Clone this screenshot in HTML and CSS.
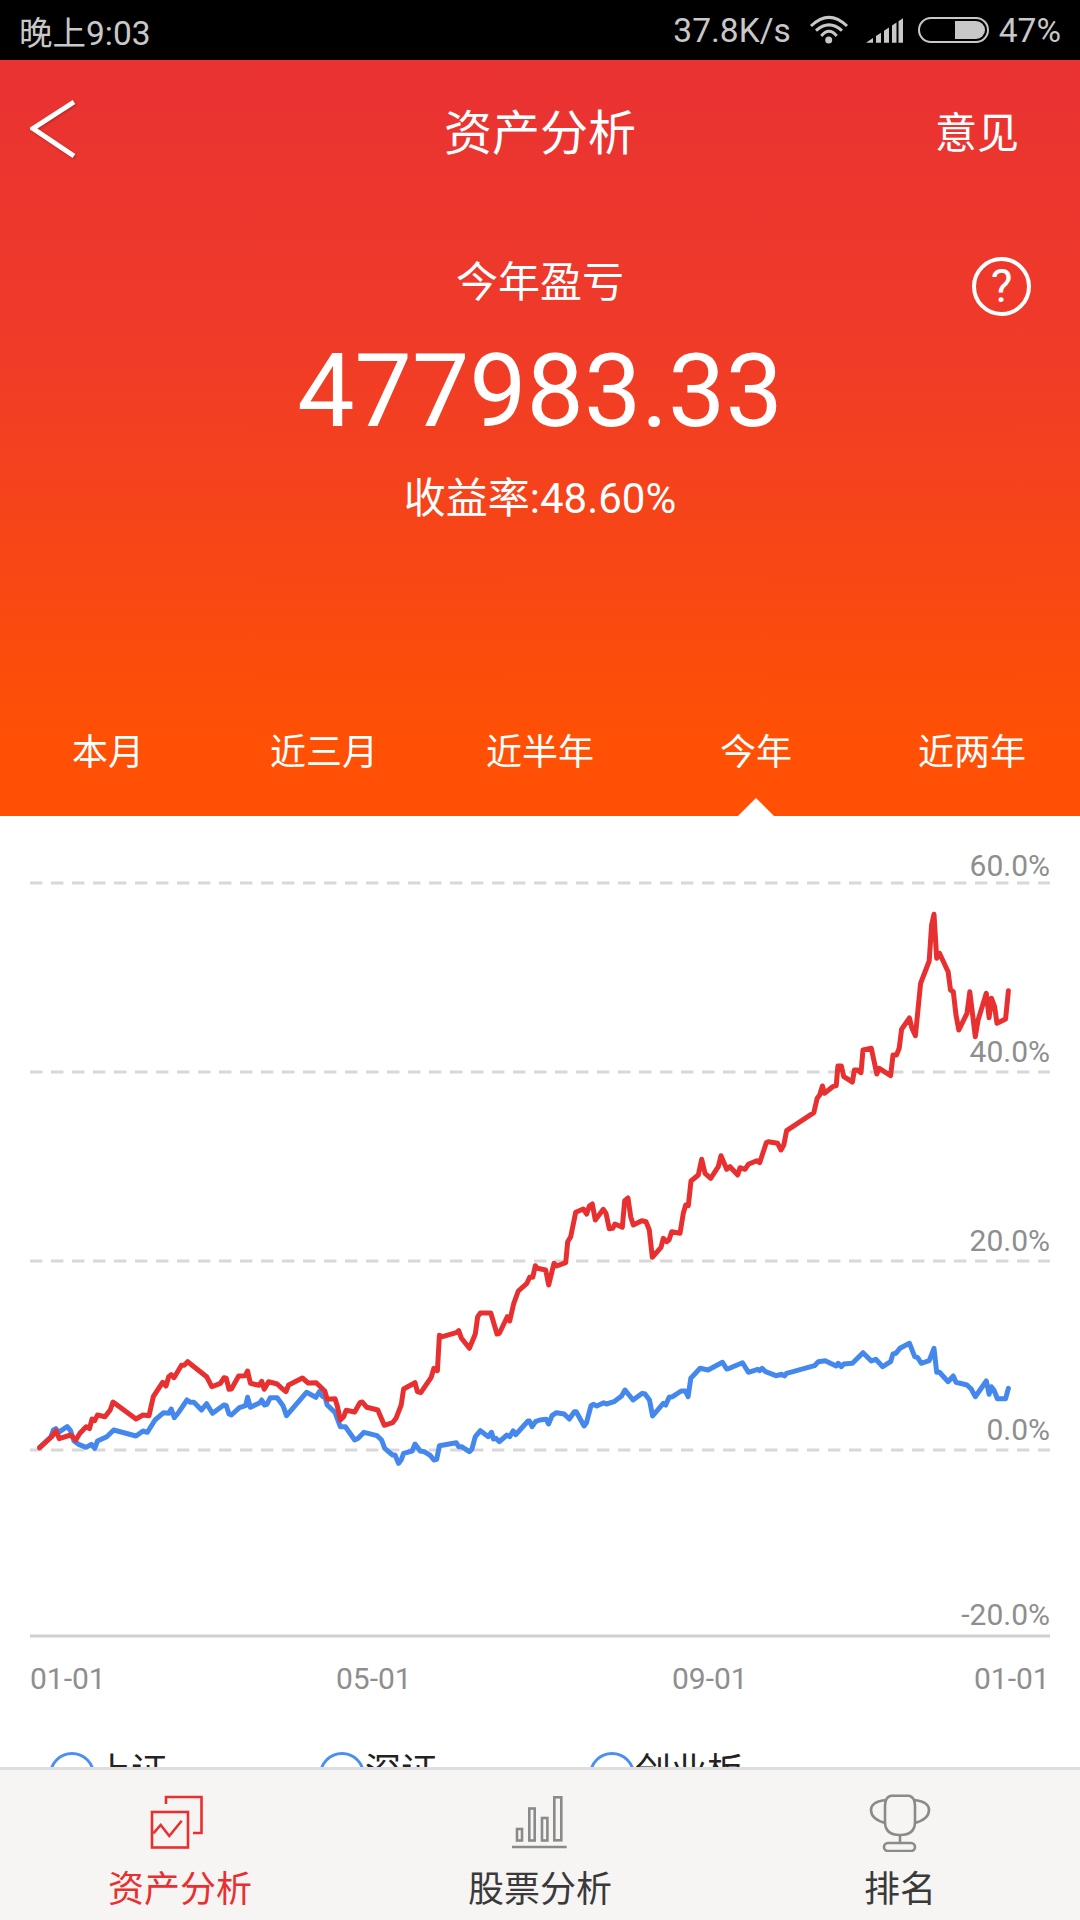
FILE: index.html
```html
<!DOCTYPE html>
<html lang="zh-CN">
<head>
  <meta charset="UTF-8" />
  <meta name="viewport" content="width=device-width, initial-scale=1.0" />
  <title>资产分析</title>
  <link rel="stylesheet" href="styles.css">
</head>
<body>

  <div class="status-bar">
    <span>晚上9:03</span>
    <div class="status-right">
      <span class="speed">37.8K/s</span>
      <svg class="wifi" viewBox="0 0 40 30" width="40" height="30">
        <path d="M2 11Q20 -6.4 38 11M7 15.7Q20 4 33 15.7M12.3 21Q20 11.5 27.7 21" />
        <circle cx="19.7" cy="25" r="3.5" />
      </svg>
      <svg class="signal" viewBox="0 0 40 28" width="40" height="28">
        <polygon points="1,26.7 8,22.1 8,26.7" />
        <polygon points="11,20.1 16,16.8 16,26.7 11,26.7" />
        <polygon points="19,14.8 24,11.5 24,26.7 19,26.7" />
        <polygon points="27,9.5 31.5,6.6 31.5,26.7 27,26.7" />
        <polygon points="33.5,5.3 38,2.3 38,26.7 33.5,26.7" />
      </svg>
      <div class="battery"><div class="battery-level"></div></div>
      <span>47%</span>
    </div>
  </div>

  <header class="hero">
    <div class="topbar">
      <svg class="back" viewBox="0 0 50 60" width="50" height="60">
        <polyline points="44,3 3,29.5 44,57" />
      </svg>
      <h1>资产分析</h1>
      <span class="feedback">意见</span>
    </div>

    <div class="summary">
      <div class="summary-label">今年盈亏</div>
      <div class="summary-value">477983.33</div>
      <div class="summary-rate">收益率:48.60%</div>
      <div class="help">?</div>
    </div>

    <nav class="periods">
      <span>本月</span>
      <span>近三月</span>
      <span>近半年</span>
      <span class="active">今年</span>
      <span>近两年</span>
    </nav>
  </header>

  <main class="content">
    <svg class="chart" viewBox="0 816 1080 936" width="1080" height="936">
      <line class="grid" x1="30" y1="883" x2="1050" y2="883" />
      <line class="grid" x1="30" y1="1072" x2="1050" y2="1072" />
      <line class="grid" x1="30" y1="1261" x2="1050" y2="1261" />
      <line class="grid" x1="30" y1="1450" x2="1050" y2="1450" />
      <line class="axis" x1="30" y1="1636" x2="1050" y2="1636" />

      <text class="y-label" x="1050" y="876">60.0%</text>
      <text class="y-label" x="1050" y="1062">40.0%</text>
      <text class="y-label" x="1050" y="1251">20.0%</text>
      <text class="y-label" x="1050" y="1440">0.0%</text>
      <text class="y-label" x="1050" y="1625">-20.0%</text>

      <text class="x-label" x="30" y="1689">01-01</text>
      <text class="x-label" x="336" y="1689">05-01</text>
      <text class="x-label" x="672" y="1689">09-01</text>
      <text class="x-label" x="974" y="1689">01-01</text>

      <polyline class="line-blue" points="39.6,1447.7 51,1436.7 53.4,1430 55.8,1428.7 58.5,1432.3 67.2,1426.7 70.6,1430.7 74,1441 79.2,1444.7 86.1,1447.3 91.3,1444.3 94.7,1448.3 97.5,1441 106.8,1436.7 113.7,1430 136,1436 143,1431 147.4,1432.3 155,1420 163.6,1412.7 168.8,1413.3 171.2,1409 174.3,1417.7 179.1,1411.7 187,1400 190.5,1402.3 193.9,1402.3 201.5,1410 206.6,1403.7 212.5,1413.3 223.9,1405 226.3,1405.7 229,1414 231.4,1415 239.4,1407.7 245.6,1405.7 247.6,1397.3 250.4,1407.3 260,1402.7 261.7,1400 264.5,1405 266.9,1404.3 270.3,1397.7 277.2,1397.7 283,1405.7 286.5,1415.7 306.5,1392.3 315.8,1397.3 319.3,1391.7 322.7,1396.7 324.8,1396 327.2,1405 335,1412.3 340.3,1426.7 345.4,1426.7 354.7,1440 358.2,1438.3 364,1432.3 377,1435.7 381.6,1440 384.7,1448.3 392.6,1455 395,1455 398.5,1463.3 401.2,1460 403.6,1453.3 412.2,1451 415,1444 420.2,1451 424.3,1451.7 430.5,1455.7 433.9,1460 436.7,1459.3 439.4,1445.7 456.3,1442.7 458.7,1446.7 461.5,1446.7 469.4,1451.7 471.8,1449.3 475.3,1436.7 480.4,1430.7 488.3,1436.7 491.5,1432.3 493.5,1439 495.9,1438.3 499.4,1441.7 507,1435 509.7,1436.7 513.1,1431 515.6,1434.7 528,1421 529.4,1421 532.1,1426.7 535.5,1421.7 540,1420 546.2,1419.3 548.6,1424 552,1415.7 556.5,1412.7 564.1,1414 569.3,1419 574.4,1411.7 576.2,1411.7 584.1,1426 586.5,1422.7 591,1405.7 593.4,1404.3 596.8,1406 603.7,1402.7 606.5,1404 614,1401.7 621.6,1396 625,1390 633,1400 642.3,1393.3 645,1394 649.5,1400 652.6,1416 663.3,1403.3 665.7,1405 669.1,1397.3 672.6,1396.7 681.2,1391 685.3,1391 688.1,1396.7 690.8,1378.3 700.1,1368.3 708.1,1370 722.5,1362.3 726.7,1369 729.4,1368.3 742.5,1362.7 748.4,1372.3 757.7,1369.3 759.7,1370.7 762.1,1368.3 765.6,1371.7 775.9,1375.7 781.8,1374.3 784.5,1376 786.6,1373.3 814.5,1365.7 818.3,1361.7 825.2,1360.7 836.2,1366 838.2,1363.3 841.4,1366.7 843.8,1364 852.4,1363.3 863,1352.7 871.3,1361 875.8,1359.3 882.7,1366.7 890.6,1361.7 893,1354 895.8,1353.3 899.9,1348.3 909.5,1343.3 914.7,1356.7 917.8,1357.7 921.2,1363.3 929.2,1360.7 934,1348.3 936.7,1372.3 939.5,1372.3 948.1,1381.7 953.3,1376 956,1382.3 967,1385 971.2,1389 975.3,1396.7 986.3,1381 989.1,1394.3 991.2,1386.7 993.9,1390 997.4,1398.7 1005.6,1398.7 1008.4,1388.3" />

      <polyline class="line-red" points="39.6,1447.7 51.7,1436.7 56.1,1430.7 59.2,1438.7 70.6,1435 75.8,1440 79.9,1433.3 86.1,1426.7 89.5,1428.7 92,1419 94.7,1420.7 97.5,1415 105,1416.7 110.2,1410 113,1402 136,1419 143,1415 149,1415.7 153.3,1396.7 162.6,1382.3 166,1386 168.7,1376.7 171.2,1374.7 174,1377.7 181.5,1365.3 184.2,1365.3 187.7,1361.7 206.6,1376.7 211.8,1386.7 220.4,1383.3 223.9,1377.7 226.3,1378.3 229,1389.3 231.4,1389 238.7,1376 245.2,1375.7 247.6,1371 250.4,1383.3 259,1385.3 261.7,1381.3 264.2,1389.3 268.6,1381.7 277.2,1384 280.7,1387.3 285.9,1391.7 288.6,1385 302.4,1378 308.2,1383 316.2,1382.7 324.8,1391 327.2,1399.3 335.1,1398.7 337.5,1406.7 340.3,1420 343.7,1416.7 346.1,1410.3 354.7,1412 359.9,1402.7 362.3,1402 366.8,1407.3 377.8,1410 384.3,1425.3 392.6,1422.7 396,1418.3 401.2,1405 403.6,1389 415,1382.7 417.4,1391.7 420.8,1392.7 431.2,1377.3 433.9,1368.3 437.4,1370.7 439.4,1335.3 442.5,1336.7 456.3,1332.7 458.7,1330.7 461.5,1338.3 469.4,1348.3 475.3,1334 477.7,1316.7 480.4,1313 490.8,1313 497,1334 499.4,1333.3 507.3,1316.7 509.7,1321 513.8,1303.3 518.3,1291 526.9,1283.3 529.7,1277.3 532.8,1277.3 535.3,1265.7 537.3,1268.3 545.7,1270 548.7,1285 554,1263.3 556.7,1266 565.7,1262.7 567.7,1241.7 570.7,1236.7 575.7,1212.3 583.3,1209 586.7,1214 589.3,1206 592.3,1204 595.3,1220 603.3,1209.3 606,1213.3 609.3,1228.7 612.7,1228.3 615,1224 622.3,1227.3 624.7,1200.7 628,1198 630.7,1216.7 633.3,1225 641.7,1220.7 646,1221.7 649.3,1230 652.3,1257.3 661,1247.3 663.3,1238.3 666.7,1241.7 669,1240 671.7,1231.7 680,1233.3 683.3,1213.3 685.7,1205 688.3,1205.7 691,1181 698.3,1175 701.7,1159.3 705,1173.3 710.7,1178.3 718.3,1166.7 721,1155.7 726.7,1169.3 730,1166.7 737.7,1175 740,1167.7 745,1169.3 748.3,1164.3 756.7,1160.7 759.7,1162.7 766.3,1142.7 768.3,1141.7 777.6,1143.3 781,1150 783.8,1145 786.6,1130.7 813.8,1112.7 817.2,1098.3 819.7,1095 822.4,1086 824.5,1093.3 832.7,1086.7 836.2,1085.7 837.9,1066 841.4,1066 843.8,1076.7 852.4,1082 854.4,1070 857.5,1070 861,1072.7 863,1050 871.3,1048.3 876.8,1074 879.2,1068.3 890.6,1075.7 893,1055 896.5,1055 899.2,1048.3 901.6,1029.3 909.5,1018 911.9,1028.3 915.4,1035.7 920.6,983.3 929.2,961 931.6,925 934,914.3 936.7,958.3 939.5,953.3 948.1,971.7 950.5,990 953.3,991.7 956,1015 958.8,1030 967,1013.3 969.8,991.7 975.3,1036.7 978.1,1020 986.3,993.3 989.1,1017.7 991.5,998.3 994.6,1006.7 997,1023.3 1005.6,1019 1008.4,990.7" />
    </svg>

    <div class="legend">
      <div class="legend-item"><span class="legend-dot"></span>上证</div>
      <div class="legend-item"><span class="legend-dot"></span>深证</div>
      <div class="legend-item"><span class="legend-dot"></span>创业板</div>
    </div>
  </main>

  <footer class="tabbar">
    <div class="tab active">
      <svg viewBox="0 0 70 60" width="70" height="60">
        <path d="M21 12V5H56.5V41H48" />
        <rect x="7" y="20" width="36" height="35.5" />
        <polyline points="8.3,41.3 15.7,33 24.3,44 36.7,28.7" />
      </svg>
      <span>资产分析</span>
    </div>
    <div class="tab">
      <svg viewBox="0 0 70 60" width="70" height="60">
        <rect x="12" y="37" width="5" height="11.5" />
        <rect x="24.3" y="16.5" width="5.4" height="32" />
        <rect x="37" y="26" width="5.4" height="22.5" />
        <rect x="49.3" y="5.3" width="7" height="43" />
        <line x1="7" y1="55" x2="61.7" y2="55" />
      </svg>
      <span>股票分析</span>
    </div>
    <div class="tab">
      <svg viewBox="0 0 70 60" width="70" height="60">
        <path d="M26 3.7H44Q50 5 50 14V30Q50 43 35 43Q20 43 20 30V14Q20 5 26 3.7Z" />
        <path d="M20 8Q6 10 6 18Q6 27 20 31M50 8Q64 10 64 18Q64 27 50 31" />
        <line x1="35" y1="43" x2="35" y2="51" />
        <rect x="19" y="51" width="31" height="8" rx="4" />
      </svg>
      <span>排名</span>
    </div>
  </footer>

</body>
</html>
```

FILE: styles.css
```css
* {
  box-sizing: border-box;
}

body {
  margin: 0;
  width: 1080px;
  height: 1920px;
  display: flex;
  flex-direction: column;
  overflow: hidden;
  background: #ffffff;
  font-family: Roboto, "Noto Sans CJK SC", sans-serif;
}

/* status bar */
.status-bar {
  height: 60px;
  flex-shrink: 0;
  background: #000000;
  color: #c8c8c8;
  font-size: 33.5px;
  display: flex;
  align-items: center;
  justify-content: space-between;
  padding: 0 19px;
}

.status-right {
  display: flex;
  align-items: center;
}

.wifi {
  margin-left: 18px;
}

.wifi path {
  fill: none;
  stroke: #c8c8c8;
  stroke-width: 3;
}

.wifi circle,
.signal polygon {
  fill: #c8c8c8;
}

.signal {
  margin-left: 16px;
}

.battery {
  width: 71px;
  height: 26px;
  margin: 0 10px 0 13px;
  border: 2px solid #c8c8c8;
  border-radius: 13px;
  display: flex;
  justify-content: flex-end;
  align-items: center;
  padding-right: 2px;
}

.battery-level {
  width: 30px;
  height: 18px;
  background: #c8c8c8;
  border-radius: 0 9px 9px 0;
}

/* red header */
.hero {
  height: 756px;
  flex-shrink: 0;
  display: flex;
  flex-direction: column;
  color: #ffffff;
  background: linear-gradient(#e93232 0%, #ef3a2a 35%, #ff5005 90%);
}

.topbar {
  height: 144px;
  flex-shrink: 0;
  display: grid;
  grid-template-columns: 1fr auto 1fr;
  align-items: center;
  padding: 0 30px 6px;
}

.back polyline {
  fill: none;
  stroke: #ffffff;
  stroke-width: 5;
}

.back {
  filter: drop-shadow(1px 1px 1px rgba(0, 0, 0, 0.25));
}

.topbar h1 {
  margin: 0;
  font-size: 48px;
  font-weight: 400;
}

.feedback {
  font-size: 42px;
  justify-self: end;
  margin-right: 31px;
}

.summary {
  position: relative;
  padding-top: 51px;
  text-align: center;
}

.summary-label {
  font-size: 42px;
  line-height: 56px;
}

.summary-value {
  margin-top: 20px;
  font-size: 102px;
  line-height: 120px;
}

.summary-rate {
  margin-top: 20px;
  font-size: 42px;
  line-height: 56px;
}

.help {
  position: absolute;
  top: 53px;
  right: 49px;
  width: 59px;
  height: 59px;
  border: 4px solid #ffffff;
  border-radius: 50%;
  font-size: 46px;
  line-height: 50px;
  text-align: center;
}

.periods {
  margin-top: auto;
  height: 122px;
  padding-bottom: 4px;
  display: grid;
  grid-template-columns: repeat(5, 1fr);
  align-items: center;
  text-align: center;
  font-size: 36px;
}

.periods span {
  position: relative;
  line-height: 52px;
}

.periods .active::after {
  content: "";
  position: absolute;
  left: 50%;
  bottom: -37px;
  margin-left: -18px;
  width: 36px;
  height: 18px;
  background: #ffffff;
  clip-path: polygon(50% 0, 100% 100%, 0 100%);
}

/* chart */
.content {
  flex: 1;
  min-height: 0;
  overflow: hidden;
}

.chart {
  display: block;
}

.grid {
  stroke: #d8d8d8;
  stroke-width: 3;
  stroke-dasharray: 12.4 8.6;
}

.axis {
  stroke: #d0d0d0;
  stroke-width: 3;
}

.y-label,
.x-label {
  fill: #8e8e8e;
  font-size: 30px;
}

.y-label {
  text-anchor: end;
}

.line-red,
.line-blue {
  fill: none;
  stroke-width: 5;
  stroke-linejoin: round;
  stroke-linecap: round;
}

.line-red {
  stroke: #e93030;
}

.line-blue {
  stroke: #4488ee;
}

.legend {
  display: grid;
  grid-template-columns: repeat(3, 270px);
  padding-left: 49px;
}

.legend-item {
  display: flex;
  align-items: flex-start;
  font-size: 36px;
  line-height: 40px;
  color: #222222;
}

.legend-dot {
  width: 46px;
  height: 46px;
  flex-shrink: 0;
  border: 3px solid #4a90f0;
  border-radius: 50%;
}

/* bottom tabs */
.tabbar {
  height: 153px;
  flex-shrink: 0;
  display: grid;
  grid-template-columns: repeat(3, 1fr);
  background: #f6f5f4;
  border-top: 3px solid #dedede;
}

.tab {
  display: flex;
  flex-direction: column;
  align-items: center;
  padding-top: 22px;
  font-size: 36px;
  line-height: 52px;
  color: #3a3a3a;
}

.tab svg {
  display: block;
  flex-shrink: 0;
  margin-bottom: 12px;
  fill: none;
  stroke: #8a8a8a;
  stroke-width: 2.6;
}

.tab.active {
  color: #e93030;
}

.tab.active svg {
  stroke: #e93030;
}
```
